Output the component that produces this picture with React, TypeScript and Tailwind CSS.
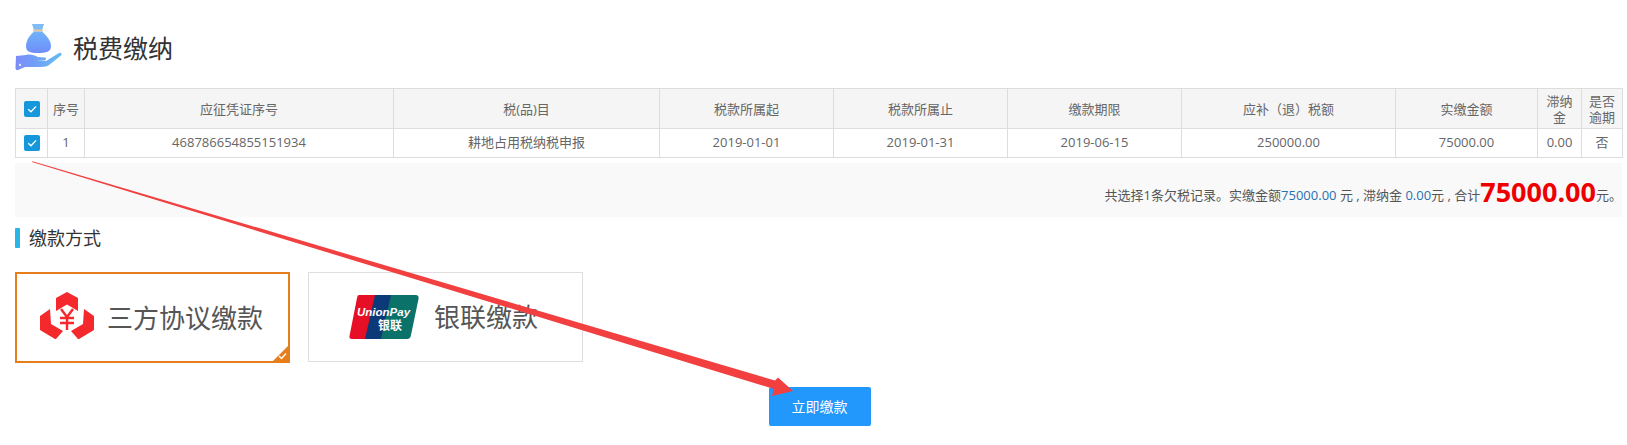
const columns = [
  { label: "序号", width: "w-[37px]", value: "1" },
  { label: "应征凭证序号", width: "w-[309px]", value: "468786654855151934" },
  { label: "税(品)目", width: "w-[266px]", value: "耕地占用税纳税申报" },
  { label: "税款所属起", width: "w-[174px]", value: "2019-01-01" },
  { label: "税款所属止", width: "w-[174px]", value: "2019-01-31" },
  { label: "缴款期限", width: "w-[174px]", value: "2019-06-15" },
  { label: "应补（退）税额", width: "w-[214px]", value: "250000.00" },
  { label: "实缴金额", width: "w-[142px]", value: "75000.00" },
  { label: "滞纳金", width: "w-[44px]", value: "0.00" },
  { label: "是否逾期", width: "w-[41px]", value: "否" },
];

function Checkbox() {
  return (
    <span className="mx-auto flex h-4 w-4 items-center justify-center rounded-[2px] bg-[#1797db]">
      <svg width="12" height="12" viewBox="0 0 12 12" fill="none">
        <path d="M2.2 6.2 L5 8.8 L10 3.4" stroke="#fff" strokeWidth="1.3" />
      </svg>
    </span>
  );
}

function BagIcon() {
  return (
    <svg width="48" height="48" viewBox="0 0 48 48">
      <defs>
        <linearGradient id="bag" x1="0" y1="0" x2="0" y2="1">
          <stop offset="0" stopColor="#6fb4f8" />
          <stop offset="1" stopColor="#6f8dfb" />
        </linearGradient>
        <linearGradient id="hand" x1="0" y1="0" x2="1" y2="0">
          <stop offset="0" stopColor="#7c8bfa" />
          <stop offset="1" stopColor="#63bdf2" />
        </linearGradient>
      </defs>
      <path d="M17 1 L29 1 L27 7 L19 7 Z" fill="#7fbcf6" />
      <rect x="18" y="6.5" width="10" height="2" fill="#e8c89a" />
      <path d="M19 8.5 L27 8.5 C32 13 36 18 36 23 C36 29 31 30 23 30 C15 30 11 29 11 23 C11 18 14 13 19 8.5 Z" fill="url(#bag)" />
      <path d="M1 33 L11 32 C15 31 19 32 23 34 L30 34.5 C32 35 31 37.5 29 37.5 L21 38 L31 38 L44 30 C46 29 47.5 31 46 32.5 L34 42 C31 44 27 44 22 44 L10 44 L3 47 C1.5 47.5 0.5 46.5 0.5 45 Z" fill="url(#hand)" />
      <circle cx="5" cy="42" r="1.2" fill="#dfe6ff" />
    </svg>
  );
}

function ThirdPartyIcon() {
  return (
    <svg width="54" height="52" viewBox="0 0 54 52">
      <path d="M27 0 L38 6 L38 19 L27 12.5 L16 19 L16 6 Z" fill="#f5282c" />
      <path d="M10 17 L11 32 L23 39 L16 47 L15 47 L0 38 L0 24 Z" fill="#f5282c" />
      <path d="M44 17 L54 24 L54 38 L39 47 L38 47 L31 39 L43 32 Z" fill="#f5282c" />
      <path d="M21 17 L27 25 L33 17 M27 25 L27 38 M20 26 L34 26 M20 31 L34 31" stroke="#f5282c" strokeWidth="2.4" fill="none" />
    </svg>
  );
}

function UnionPayLogo() {
  return (
    <svg width="70" height="44" viewBox="0 0 70 44">
      <path d="M10 0 L34 0 L24 44 L3 44 C1 44 0 43 0.5 41 L8 3 C8.5 1 9 0 10 0 Z" fill="#e60f25" />
      <path d="M26 0 L50 0 L40 44 L16 44 Z" fill="#0c3a78" />
      <path d="M42 0 L66 0 C69 0 70 1 69.5 4 L62 40 C61.5 43 60 44 58 44 L32 44 Z" fill="#0a7269" />
      <text x="8" y="21" fill="#fff" fontSize="11.5" fontWeight="700" fontStyle="italic" fontFamily="'Liberation Sans', sans-serif">UnionPay</text>
      <text x="29" y="35" fill="#fff" fontSize="12" fontWeight="700" fontFamily="'Noto Sans CJK SC', sans-serif">银联</text>
    </svg>
  );
}

function Arrow() {
  return (
    <svg className="pointer-events-none absolute left-0 top-0" width="1627" height="445" viewBox="0 0 1627 445">
      <path d="M32 162 L32.6 161.2 L775 380.5 L778 377.5 L793 391 L772 396 L774 389 Z" fill="#f23f3f" />
    </svg>
  );
}

export default function App() {
  return (
    <div className="relative h-[445px] w-[1627px] overflow-hidden bg-white px-[15px] font-['Open_Sans','Noto_Sans_CJK_SC',sans-serif] text-[13px] text-[#666]">
      <div className="flex h-[88px] items-center pt-[6px]">
        <BagIcon />
        <h1 className="mt-[3px] ml-[10px] text-[25px] leading-none font-normal text-[#333]">税费缴纳</h1>
      </div>

      <table className="w-[1607px] table-fixed border-collapse text-center">
        <thead>
          <tr className="h-[40px] bg-[#f5f5f5]">
            <th className="w-[32px] border border-[#dddddd] font-normal"><Checkbox /></th>
            {columns.map((c) => (
              <th key={c.label} className={`${c.width} border border-[#dddddd] px-[3px] leading-[16px] font-normal`}>
                {c.label}
              </th>
            ))}
          </tr>
        </thead>
        <tbody>
          <tr className="h-[29px]">
            <td className="border border-[#dddddd]"><Checkbox /></td>
            {columns.map((c) => (
              <td key={c.label} className="border border-[#dddddd]">{c.value}</td>
            ))}
          </tr>
        </tbody>
      </table>

      <div className="mt-[5px] flex h-[54px] w-[1607px] items-end justify-end bg-[#f9f9f9] pb-[9px] text-[#555]">
        <span className="mb-[3px]">共选择1条欠税记录。实缴金额<span className="text-[#2a70b0]">75000.00</span> 元 , 滞纳金 <span className="text-[#2a70b0]">0.00</span>元 ,  合计</span>
        <span className="text-[27px] leading-[32px] font-bold text-[#ee0000]">75000.00</span>
        <span className="mb-[3px]">元。</span>
      </div>

      <div className="mt-[11px] flex h-[20px] items-center">
        <span className="h-[20px] w-[5px] rounded-[1px] bg-[#29b6e6]" />
        <span className="ml-[9px] text-[18px] leading-none text-[#333]">缴款方式</span>
      </div>

      <div className="mt-[24px] flex items-start gap-[18px]">
        <div className="relative flex h-[91px] w-[275px] items-center overflow-hidden border-2 border-[#e67e1c] pl-[23px]">
          <ThirdPartyIcon />
          <span className="ml-[13px] text-[26px] leading-none text-[#555]">三方协议缴款</span>
          <span className="absolute right-0 bottom-0 h-0 w-0 border-b-[15px] border-l-[15px] border-b-[#e67e1c] border-l-transparent" />
          <svg className="absolute right-[1px] bottom-[1px]" width="9" height="8" viewBox="0 0 9 8">
            <path d="M1 4 L3.5 6.5 L8 1.5" stroke="#fff" strokeWidth="1.4" fill="none" />
          </svg>
        </div>
        <div className="flex h-[90px] w-[275px] items-center border border-[#dedede] pl-[40px]">
          <UnionPayLogo />
          <span className="ml-[15px] text-[26px] leading-none text-[#555]">银联缴款</span>
        </div>
      </div>

      <div className="mt-[24px] flex w-full justify-center">
        <button type="button" className="ml-[12px] h-[39px] w-[102px] rounded-[2px] bg-[#2298fd] text-[14px] text-white">
          立即缴款
        </button>
      </div>

      <Arrow />
    </div>
  );
}
